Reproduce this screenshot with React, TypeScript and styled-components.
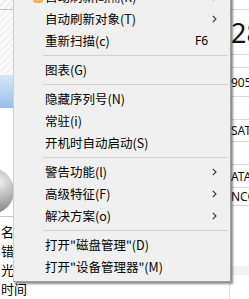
import React from 'react';
import styled, { createGlobalStyle } from 'styled-components';

const GlobalStyle = createGlobalStyle`
  html, body {
    margin: 0;
    padding: 0;
    background: #fff;
  }
  body {
    font-family: "Noto Sans CJK SC", "Noto Sans", sans-serif;
    color: #000;
  }
`;

type MenuEntry =
  | { kind: 'item'; label: string; shortcut?: string; sub?: boolean; icon?: boolean }
  | { kind: 'sep' };

const entries: MenuEntry[] = [
  { kind: 'item', label: '自动刷新间隔(R)', sub: true, icon: true },
  { kind: 'item', label: '自动刷新对象(T)', sub: true },
  { kind: 'item', label: '重新扫描(c)', shortcut: 'F6' },
  { kind: 'sep' },
  { kind: 'item', label: '图表(G)' },
  { kind: 'sep' },
  { kind: 'item', label: '隐藏序列号(N)' },
  { kind: 'item', label: '常驻(i)' },
  { kind: 'item', label: '开机时自动启动(S)' },
  { kind: 'sep' },
  { kind: 'item', label: '警告功能(l)', sub: true },
  { kind: 'item', label: '高级特征(F)', sub: true },
  { kind: 'item', label: '解决方案(o)', sub: true },
  { kind: 'sep' },
  { kind: 'item', label: '打开"磁盘管理"(D)' },
  { kind: 'item', label: '打开"设备管理器"(M)' },
];

const tableRows = [
  { h: 10, text: '' },
  { h: 45, text: '28', big: true },
  { h: 13, text: '' },
  { h: 29, text: '905' },
  { h: 23, text: '' },
  { h: 22, text: 'SAT' },
  { h: 23, text: '' },
  { h: 23, text: 'ATA' },
  { h: 18, text: 'NCQ' },
];

const Screen = styled.div`
  position: relative;
  width: 249px;
  height: 299px;
  overflow: hidden;
  display: flex;
  background: #fff;
`;

const LeftPane = styled.div`
  width: 229px;
  flex-shrink: 0;
  display: flex;
  flex-direction: column;
  & > * {
    flex-shrink: 0;
  }
`;

const TopStrip = styled.div`
  height: 9px;
  border-bottom: 1px solid #c4c4c4;
  background: repeating-linear-gradient(135deg, #fafafa 0 3px, #efefef 3px 5px);
`;

const HatchArea = styled.div`
  height: 65px;
  background: repeating-linear-gradient(135deg, #fbfbfb 0 3px, #f2f2f2 3px 5px);
`;

const BlueBar = styled.div`
  height: 33px;
  background: linear-gradient(#d6e5f6, #b2cfef 60%, #97bde9);
`;

const Blank = styled.div<{ $h: number }>`
  height: ${(p) => p.$h}px;
`;

const SphereRow = styled.div`
  height: 46px;
  position: relative;
  overflow: hidden;
`;

const Sphere = styled.div`
  position: absolute;
  left: -32px;
  top: 0;
  width: 46px;
  height: 46px;
  border-radius: 50%;
  background: radial-gradient(circle at 70% 30%, #eeeeee, #a8a8a8 45%, #6a6a6a 90%);
`;

const Rule = styled.div`
  height: 1px;
  margin-top: 2px;
  background: #c8c8c8;
`;

const InfoList = styled.div`
  padding-top: 5px;
  display: flex;
  flex-direction: column;
`;

const InfoLabel = styled.div`
  height: 19px;
  line-height: 19px;
  padding-left: 1px;
  font-size: 13px;
  white-space: nowrap;
`;

const RightPane = styled.div`
  flex: 1;
  display: flex;
  flex-direction: column;
  border-left: 1px solid #e2e2e2;
  overflow: hidden;
  & > * {
    flex-shrink: 0;
  }
`;

const Cell = styled.div<{ $h: number; $big?: boolean }>`
  height: ${(p) => p.$h}px;
  box-sizing: border-box;
  border-bottom: 1px solid #d6d6d6;
  display: flex;
  align-items: center;
  padding-left: 1px;
  font-family: "Noto Sans", "DejaVu Sans", sans-serif;
  font-size: ${(p) => (p.$big ? '27px' : '12px')};
  white-space: nowrap;
  color: #111;
`;

const GrayBand = styled.div`
  height: 9px;
  margin-top: 60px;
  background: #f2f2f2;
`;

const Menu = styled.div`
  position: absolute;
  left: 13px;
  top: -18px;
  width: 216px;
  padding: 3px 0;
  background: #f0f0f0;
  border: 1px solid #a0a0a0;
  border-left-color: #cfcfcf;
  box-shadow: 2px 2px 2px rgba(0, 0, 0, 0.45);
  font-size: 12.5px;
  color: #000;
`;

const Item = styled.div`
  position: relative;
  height: 22px;
  line-height: 22px;
  padding-left: 31px;
  display: flex;
  align-items: center;
  white-space: nowrap;
`;

const Label = styled.span`
  flex: 1;
`;

const Shortcut = styled.span`
  font-family: "Noto Sans", sans-serif;
  font-size: 12px;
  margin-right: 22px;
`;

const Arrow = styled.svg`
  width: 5px;
  height: 8px;
  margin-right: 13px;
`;

const Icon = styled.div`
  position: absolute;
  left: 19px;
  top: 7px;
  width: 10px;
  height: 10px;
  border-radius: 3px;
  background: radial-gradient(circle at 40% 40%, #ffd08a, #f59a2e);
`;

const Separator = styled.div`
  height: 1px;
  margin: 3px 2px 3px 29px;
  background: #d2d2d2;
`;

export default function App() {
  return (
    <>
      <GlobalStyle />
      <Screen>
        <LeftPane>
          <TopStrip />
          <HatchArea />
          <BlueBar />
          <Blank $h={60} />
          <SphereRow>
            <Sphere />
          </SphereRow>
          <Rule />
          <InfoList>
            <InfoLabel>名称</InfoLabel>
            <InfoLabel>错误</InfoLabel>
            <InfoLabel>光驱</InfoLabel>
            <InfoLabel>时间</InfoLabel>
          </InfoList>
        </LeftPane>
        <RightPane>
          {tableRows.map((r, i) => (
            <Cell key={i} $h={r.h} $big={r.big}>
              {r.text}
            </Cell>
          ))}
          <GrayBand />
        </RightPane>
        <Menu>
          {entries.map((e, i) =>
            e.kind === 'sep' ? (
              <Separator key={i} />
            ) : (
              <Item key={i}>
                {e.icon && <Icon />}
                <Label>{e.label}</Label>
                {e.shortcut && <Shortcut>{e.shortcut}</Shortcut>}
                {e.sub && (
                  <Arrow viewBox="0 0 5 8">
                    <path d="M0.8 0.8 L4 4 L0.8 7.2" fill="none" stroke="#333" strokeWidth="1.1" />
                  </Arrow>
                )}
              </Item>
            )
          )}
        </Menu>
      </Screen>
    </>
  );
}
